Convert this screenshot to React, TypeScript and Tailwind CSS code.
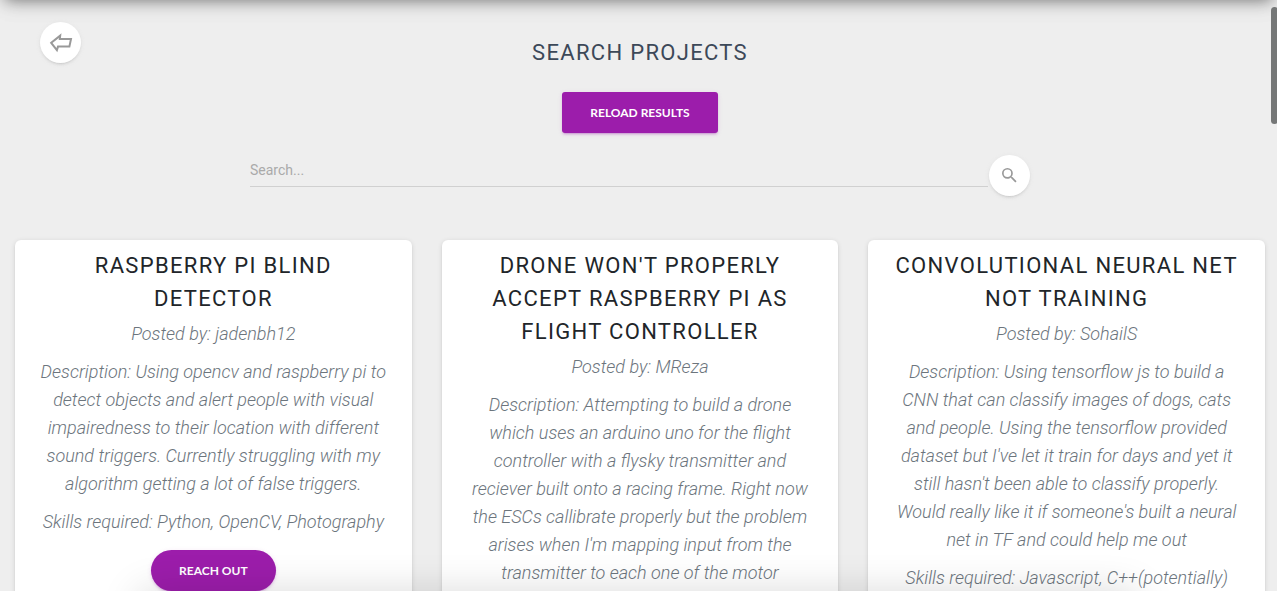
import React from 'react';

interface Project {
  title: string;
  author: string;
  description: string;
  skills?: string;
}

const PROJECTS: Project[] = [
  {
    title: 'Raspberry Pi Blind Detector',
    author: 'jadenbh12',
    description:
      'Using opencv and raspberry pi to detect objects and alert people with visual impairedness to their location with different sound triggers. Currently struggling with my algorithm getting a lot of false triggers.',
    skills: 'Python, OpenCV, Photography',
  },
  {
    title: "Drone won't properly accept Raspberry Pi as Flight Controller",
    author: 'MReza',
    description:
      "Attempting to build a drone which uses an arduino uno for the flight controller with a flysky transmitter and reciever built onto a racing frame. Right now the ESCs callibrate properly but the problem arises when I'm mapping input from the transmitter to each one of the motor",
  },
  {
    title: 'Convolutional Neural Net not training',
    author: 'SohailS',
    description:
      "Using tensorflow js to build a CNN that can classify images of dogs, cats and people. Using the tensorflow provided dataset but I've let it train for days and yet it still hasn't been able to classify properly. Would really like it if someone's built a neural net in TF and could help me out",
    skills: 'Javascript, C++(potentially)',
  },
];

/** White circular button used for back and search. */
const RoundButton: React.FC<{ label: string; children: React.ReactNode }> = ({ label, children }) => (
  <button
    type="button"
    aria-label={label}
    className="flex size-[41px] shrink-0 items-center justify-center rounded-full bg-white text-[#999999] shadow-[0_2px_2px_0_rgba(153,153,153,0.14),0_3px_1px_-2px_rgba(153,153,153,0.2),0_1px_5px_0_rgba(153,153,153,0.12)]"
  >
    {children}
  </button>
);

const ProjectCard: React.FC<{ project: Project }> = ({ project }) => (
  <article className="rounded-md bg-white px-[23px] pt-[9px] pb-6 text-center shadow-[0_2px_2px_0_rgba(0,0,0,0.05),0_1px_5px_0_rgba(0,0,0,0.12)]">
    <h2 className="text-[22px] leading-[33px] tracking-[0.06em] text-[#212529] uppercase">{project.title}</h2>
    <div className="flex flex-col gap-[10px] pt-[5px] text-[18px] leading-7 font-light text-[#6c757d] italic">
      <p>{`Posted by: ${project.author}`}</p>
      <p>{`Description: ${project.description}`}</p>
      {project.skills && <p>{`Skills required: ${project.skills}`}</p>}
    </div>
    <button
      type="button"
      className="mt-[14px] h-[41px] rounded-full bg-[#9c1dab] px-7 font-[Lato] text-[12px] font-bold text-white uppercase shadow-[0_2px_2px_0_rgba(156,39,176,0.14),0_3px_1px_-2px_rgba(156,39,176,0.2),0_1px_5px_0_rgba(156,39,176,0.12)]"
    >
      Reach out
    </button>
  </article>
);

export default function App() {
  return (
    <div className="relative h-screen overflow-hidden bg-[#eeeeee] font-[Roboto,sans-serif]">
      {/* Shadow cast by the navbar above the scroll area */}
      <div className="pointer-events-none absolute inset-x-0 -top-20 h-20 shadow-[0_5px_15px_-5px_rgba(0,0,0,0.5),0_4px_25px_0_rgba(0,0,0,0.06)]" />

      <main className="pt-[22px] pr-3 pl-[15px]">
        <header className="grid grid-cols-[1fr_auto_1fr]">
          <div className="pl-[25px]">
            <RoundButton label="Back">
              <svg viewBox="0 0 24 20" className="h-5 w-6" fill="none" stroke="currentColor" strokeWidth="2">
                <path d="M2.2 9.8 L11.2 2.6 L10.8 6 H22 L20.4 13.6 H9 L7.9 17.2 Z" />
              </svg>
            </RoundButton>
          </div>
          <div className="flex flex-col items-center gap-[23px] pt-[14px]">
            <h1 className="text-[22px] leading-[33px] tracking-[0.06em] text-[#3c4858] uppercase">Search Projects</h1>
            <button
              type="button"
              className="h-[41px] rounded-[3px] bg-[#9c1dab] px-7 font-[Lato] text-[12px] font-bold text-white uppercase shadow-[0_2px_2px_0_rgba(156,39,176,0.14),0_3px_1px_-2px_rgba(156,39,176,0.2),0_1px_5px_0_rgba(156,39,176,0.12)]"
            >
              Reload results
            </button>
          </div>
        </header>

        <form className="mx-auto mt-[22px] flex w-[780px] max-w-full items-start gap-px">
          <input
            type="text"
            aria-label="Search"
            placeholder="Search..."
            className="h-8 min-w-0 flex-1 border-b border-[#d0d0d0] bg-transparent pb-0.5 text-[14px] outline-none placeholder:text-[#aaaaaa]"
          />
          <RoundButton label="Search">
            <svg viewBox="0 0 24 24" className="size-5" fill="currentColor">
              <path d="M14.9 13.3h-.79l-.28-.27A6.47 6.47 0 0 0 15.4 8.8 6.5 6.5 0 1 0 8.9 15.3c1.61 0 3.09-.59 4.23-1.57l.27.28v.79l5 4.99L19.89 18.3l-4.99-5zm-6 0a4.5 4.5 0 1 1 0-9 4.5 4.5 0 0 1 0 9z" />
            </svg>
          </RoundButton>
        </form>

        <section className="mt-11 grid grid-cols-3 gap-[30px]">
          {PROJECTS.map((project) => (
            <ProjectCard key={project.author} project={project} />
          ))}
        </section>
      </main>

      {/* Soft shade rising from the bottom edge */}
      <div className="pointer-events-none absolute inset-x-[140px] -bottom-12 h-10 shadow-[0_-6px_40px_0_rgba(0,0,0,0.16)]" />

      {/* Scroll thumb */}
      <div className="absolute top-[7px] -right-px h-[117px] w-[7px] rounded-full bg-[#757777]" />
    </div>
  );
}
